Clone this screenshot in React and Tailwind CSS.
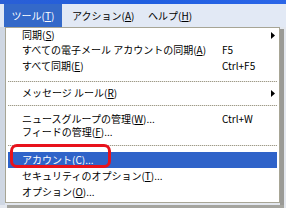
import React from "react";

const U = ({ children }) => <span className="underline underline-offset-[1px]">{children}</span>;

function Item({ label, acc, rest = "", shortcut, arrow, selected, h }) {
  return (
    <div
      className={`flex items-center ${h} ${selected ? "bg-[#2f63c9] text-white" : "text-black"} mx-[2px] pl-[14px] relative`}
    >
      <span className="whitespace-nowrap">
        {label}(<U>{acc}</U>){rest}
      </span>
      {shortcut && <span className="absolute left-[214px] whitespace-nowrap">{shortcut}</span>}
      {arrow && (
        <svg className="absolute left-[263px]" width="4" height="7" viewBox="0 0 4 7">
          <path d="M0 0 L4 3.5 L0 7 Z" fill="#000" />
        </svg>
      )}
    </div>
  );
}

const Sep = ({ h }) => (
  <div className={`flex items-center ${h} mx-[2px]`}>
    <div className="w-full h-[1px] bg-[repeating-linear-gradient(90deg,#9d9a8c_0_1px,#e6e3d8_1px_2px)]" />
  </div>
);

export default function App() {
  return (
    <div
      className="w-[286px] h-[208px] overflow-hidden bg-[#e3e7ee] text-[10px] leading-none"
      style={{ fontFamily: '"Noto Sans CJK JP", "Noto Sans", sans-serif' }}
    >
      <div className="h-[4px] bg-gradient-to-r from-[#2a5fd6] via-[#1f5ee0] to-[#2b66e8]" />
      <div className="h-[23px] flex items-stretch bg-[#e2e9f5] text-black">
        <div className="w-[4px] shrink-0" />
        <div className="w-[58px] shrink-0 bg-[#3469c9] text-white flex items-center justify-center">
          ツール(<U>T</U>)
        </div>
        <div className="w-[10px] shrink-0" />
        <div className="w-[76px] shrink-0 flex items-center">アクション(<U>A</U>)</div>
        <div className="flex items-center">ヘルプ(<U>H</U>)</div>
      </div>
      <div className="flex">
        <div className="w-[5px] bg-[#cfd7e3]" />
        <div className="flex flex-col">
          <div className="w-[275px] h-[176px] bg-white border border-[#a7a595] flex flex-col relative">
            <Item label="同期" acc="S" arrow h="h-[14px]" />
            <Item label="すべての電子メール アカウントの同期" acc="A" shortcut="F5" h="h-[16px]" />
            <Item label="すべて同期" acc="E" shortcut="Ctrl+F5" h="h-[16px]" />
            <Sep h="h-[14px]" />
            <Item label="メッセージ ルール" acc="R" arrow h="h-[10px]" />
            <Sep h="h-[14px]" />
            <Item label="ニュースグループの管理" acc="W" rest="..." shortcut="Ctrl+W" h="h-[13px]" />
            <Item label="フィードの管理" acc="F" rest="..." h="h-[14px]" />
            <Sep h="h-[13px]" />
            <Item label="アカウント" acc="C" rest="..." selected h="h-[16px]" />
            <Item label="セキュリティのオプション" acc="T" rest="..." h="h-[16px]" />
            <Item label="オプション" acc="O" rest="..." h="h-[16px]" />
            <div className="absolute left-[4px] top-[116px] w-[101px] h-[24px] rounded-[7px] border-[3px] border-[#e8121b]" />
          </div>
        </div>
        <div className="w-[4px] mt-[2px] h-[176px] bg-[#9a9a96]" />
      </div>
      <div className="ml-[7px] w-[277px] h-[3px] bg-[#a4a49e]" />
    </div>
  );
}
